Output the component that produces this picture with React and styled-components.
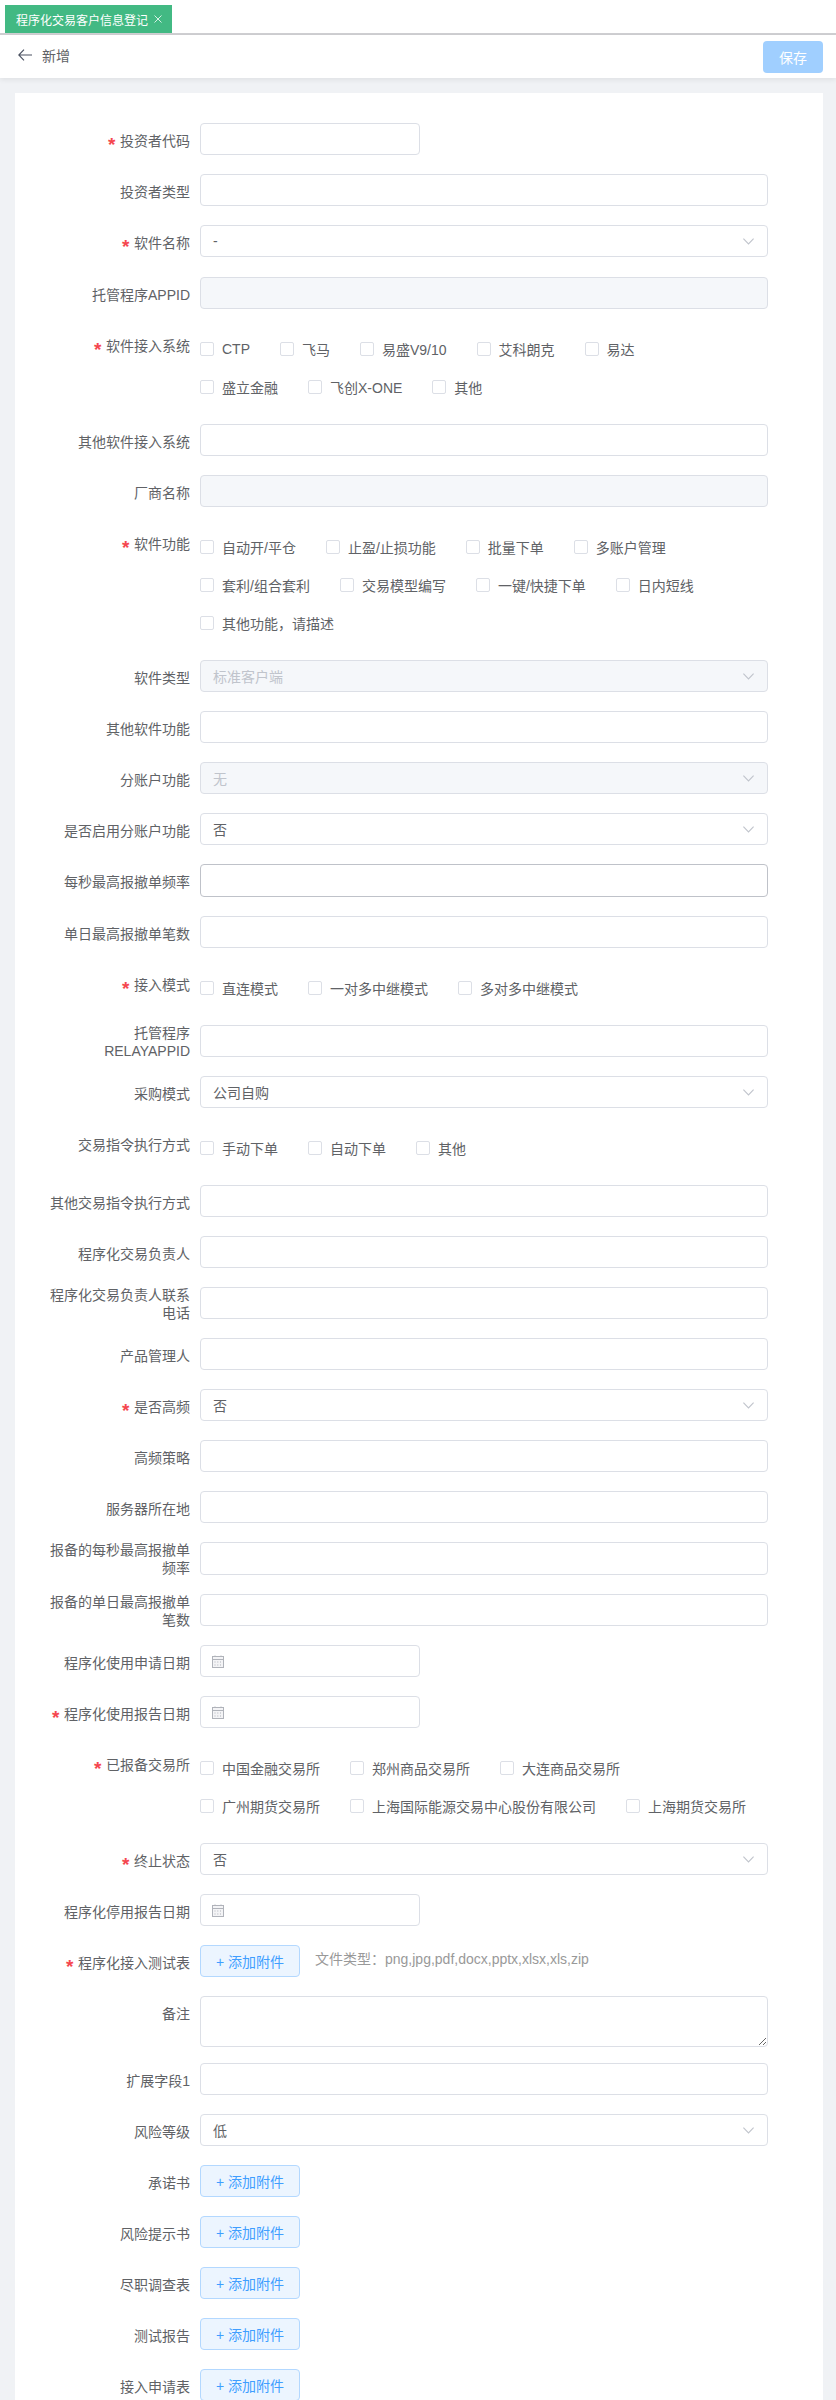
import React from "react";
import styled, { createGlobalStyle } from "styled-components";

const Global = createGlobalStyle`
  html, body { margin: 0; padding: 0; background: #f0f2f5; }
  body { font-family: "Liberation Sans", "Noto Sans CJK SC", sans-serif; font-size: 14px; color: #606266; }
  * { box-sizing: border-box; }
`;

const Page = styled.div`
  width: 836px;
  height: 2400px;
  overflow: hidden;
  background: #f0f2f5;
`;

const TabBar = styled.div`
  height: 35px;
  padding: 5px 0 0 5px;
  background: #fff;
  border-bottom: 2px solid #cfcfd2;
`;

const Tab = styled.div`
  width: 167px;
  height: 28px;
  padding-left: 11px;
  display: flex;
  align-items: center;
  gap: 6px;
  background: #42b983;
  color: #fff;
  font-size: 12px;
`;

const Header = styled.header`
  height: 43px;
  padding: 0 13px 0 18px;
  display: flex;
  align-items: center;
  justify-content: space-between;
  background: #fff;
  box-shadow: 0 2px 5px rgba(0, 0, 0, 0.07);
`;

const BackGroup = styled.div`
  display: flex;
  align-items: center;
  gap: 10px;
  margin-bottom: 3px;
  color: #606266;
`;

const SaveButton = styled.button`
  width: 60px;
  height: 32px;
  margin-top: 1px;
  border: 0;
  border-radius: 4px;
  background: #a0cfff;
  color: #fff;
  font: inherit;
`;

const Panel = styled.main`
  width: 808px;
  margin: 15px 0 0 15px;
  padding: 30px 55px 0 25px;
  background: #fff;
  min-height: 2400px;
`;

const Row = styled.div`
  display: flex;
  align-items: flex-start;
  margin-bottom: ${(p) => p.$gap ?? 19}px;
`;

const Label = styled.label`
  flex: none;
  width: 150px;
  height: 32px;
  margin-right: 10px;
  padding-top: ${(p) => (p.$two ? 0 : 9)}px;
  margin-top: ${(p) => (p.$two ? -1 : 0)}px;
  line-height: 18px;
  text-align: right;
  white-space: pre-line;
  color: #606266;
`;

const Star = styled.span`
  display: inline-block;
  width: 9px;
  margin-right: 3px;
  color: #f5474f;
  font-size: 19px;
  font-weight: 700;
  line-height: 18px;
  text-align: left;
  vertical-align: -5px;
`;

const TextInput = styled.input`
  display: block;
  width: ${(p) => (p.$short ? "220px" : "100%")};
  height: ${(p) => p.$height ?? 32}px;
  padding: 0 12px;
  border: 1px solid ${(p) => (p.$hover ? "#bfc2c9" : "#dcdfe6")};
  border-radius: 4px;
  background: ${(p) => (p.disabled ? "#f5f7fa" : "#fff")};
  font: inherit;
  color: #606266;
  outline: none;
`;

const TextArea = styled.textarea`
  display: block;
  width: 100%;
  height: 51px;
  padding: 5px 12px;
  border: 1px solid #dcdfe6;
  border-radius: 4px;
  background: #fff;
  font: inherit;
  resize: vertical;
  outline: none;
`;

const SelectBox = styled.div`
  width: 100%;
  height: 32px;
  padding: 0 13px 0 12px;
  display: flex;
  align-items: center;
  justify-content: space-between;
  border: 1px solid #dcdfe6;
  border-radius: 4px;
  background: ${(p) => (p.$disabled ? "#f5f7fa" : "#fff")};
  color: ${(p) => (p.$disabled ? "#c0c4cc" : "#606266")};
`;

const DateBox = styled.div`
  width: 220px;
  height: 32px;
  padding-left: 11px;
  display: flex;
  align-items: center;
  border: 1px solid #dcdfe6;
  border-radius: 4px;
  background: #fff;
`;

const CheckGroup = styled.div`
  flex: 1;
  padding-top: 2px;
  margin-bottom: -1px;
`;

const CheckLine = styled.div`
  height: 38px;
  display: flex;
  align-items: center;
  gap: 30px;
`;

const CheckItem = styled.span`
  display: inline-flex;
  align-items: center;
  gap: 8px;
  white-space: nowrap;
  color: #606266;
`;

const CheckBox = styled.span`
  width: 14px;
  height: 14px;
  border: 1px solid #dcdfe6;
  border-radius: 2px;
  background: #fff;
`;

const UploadLine = styled.div`
  display: flex;
  align-items: flex-start;
  gap: 15px;
`;

const UploadButton = styled.button`
  width: 100px;
  height: 32px;
  padding: 0;
  border: 1px solid #b3d8ff;
  border-radius: 4px;
  background: #ecf5ff;
  color: #409eff;
  font: inherit;
`;

const Tip = styled.span`
  line-height: 28px;
  color: #999;
  white-space: nowrap;
`;

const Control = styled.div`
  flex: 1;
  min-width: 0;
`;

const CloseIcon = () => (
  <svg width="8" height="8" viewBox="0 0 8 8" fill="none" stroke="#e8f7f0" strokeWidth="0.9">
    <path d="M0.5 0.5 7.5 7.5M7.5 0.5 0.5 7.5" />
  </svg>
);

const BackIcon = () => (
  <svg width="14" height="12" viewBox="0 0 14 12" fill="none" stroke="#4a5160" strokeWidth="1.1">
    <path d="M14 6H0.8M6 0.6 0.8 6 6 11.4" />
  </svg>
);

const Chevron = () => (
  <svg width="11" height="7" viewBox="0 0 11 7" fill="none" stroke="#c0c4cc" strokeWidth="1.1">
    <path d="M0.4 0.6 5.5 6 10.6 0.6" />
  </svg>
);

const CalendarIcon = () => (
  <svg width="12" height="13" viewBox="0 0 12 13" fill="none" stroke="#b0b3ba" strokeWidth="1">
    <rect x="0.5" y="1.5" width="11" height="11" fill="#f4f4f6" />
    <path d="M0.5 4.5H11.5" />
    <path d="M3 0.5V2M9 0.5V2" />
    <path d="M2.5 7H4M5.3 7H6.8M8 7H9.5M2.5 10H4M5.3 10H6.8M8 10H9.5" strokeDasharray="1 0.5" />
  </svg>
);

const rows = [
  { label: "投资者代码", req: 1, type: "short" },
  { label: "投资者类型", type: "input" },
  { label: "软件名称", req: 1, type: "select", value: "-", gap: 20 },
  { label: "托管程序APPID", type: "disabled" },
  { label: "软件接入系统", req: 1, type: "check", lines: [["CTP", "飞马", "易盛V9/10", "艾科朗克", "易达"], ["盛立金融", "飞创X-ONE", "其他"]] },
  { label: "其他软件接入系统", type: "input" },
  { label: "厂商名称", type: "disabled" },
  { label: "软件功能", req: 1, type: "check", lines: [["自动开/平仓", "止盈/止损功能", "批量下单", "多账户管理"], ["套利/组合套利", "交易模型编写", "一键/快捷下单", "日内短线"], ["其他功能，请描述"]] },
  { label: "软件类型", type: "select", value: "标准客户端", disabled: 1 },
  { label: "其他软件功能", type: "input" },
  { label: "分账户功能", type: "select", value: "无", disabled: 1 },
  { label: "是否启用分账户功能", type: "select", value: "否" },
  { label: "每秒最高报撤单频率", type: "input", height: 33, hover: 1 },
  { label: "单日最高报撤单笔数", type: "input" },
  { label: "接入模式", req: 1, type: "check", lines: [["直连模式", "一对多中继模式", "多对多中继模式"]] },
  { label: "托管程序\nRELAYAPPID", two: 1, type: "input" },
  { label: "采购模式", type: "select", value: "公司自购" },
  { label: "交易指令执行方式", type: "check", lines: [["手动下单", "自动下单", "其他"]] },
  { label: "其他交易指令执行方式", type: "input" },
  { label: "程序化交易负责人", type: "input" },
  { label: "程序化交易负责人联系\n电话", two: 1, type: "input" },
  { label: "产品管理人", type: "input" },
  { label: "是否高频", req: 1, type: "select", value: "否" },
  { label: "高频策略", type: "input" },
  { label: "服务器所在地", type: "input" },
  { label: "报备的每秒最高报撤单\n频率", two: 1, type: "input", height: 33 },
  { label: "报备的单日最高报撤单\n笔数", two: 1, type: "input" },
  { label: "程序化使用申请日期", type: "date" },
  { label: "程序化使用报告日期", req: 1, type: "date" },
  { label: "已报备交易所", req: 1, type: "check", lines: [["中国金融交易所", "郑州商品交易所", "大连商品交易所"], ["广州期货交易所", "上海国际能源交易中心股份有限公司", "上海期货交易所"]] },
  { label: "终止状态", req: 1, type: "select", value: "否" },
  { label: "程序化停用报告日期", type: "date" },
  { label: "程序化接入测试表", req: 1, type: "upload", tip: "文件类型：png,jpg,pdf,docx,pptx,xlsx,xls,zip" },
  { label: "备注", type: "textarea", gap: 16 },
  { label: "扩展字段1", type: "input" },
  { label: "风险等级", type: "select", value: "低" },
  { label: "承诺书", type: "upload" },
  { label: "风险提示书", type: "upload" },
  { label: "尽职调查表", type: "upload" },
  { label: "测试报告", type: "upload" },
  { label: "接入申请表", type: "upload" },
];

function FieldControl({ row }) {
  switch (row.type) {
    case "short":
      return <TextInput $short />;
    case "disabled":
      return <TextInput disabled />;
    case "select":
      return (
        <SelectBox $disabled={row.disabled}>
          <span>{row.value}</span>
          <Chevron />
        </SelectBox>
      );
    case "check":
      return (
        <CheckGroup>
          {row.lines.map((line, i) => (
            <CheckLine key={i}>
              {line.map((text) => (
                <CheckItem key={text}>
                  <CheckBox />
                  {text}
                </CheckItem>
              ))}
            </CheckLine>
          ))}
        </CheckGroup>
      );
    case "date":
      return (
        <DateBox>
          <CalendarIcon />
        </DateBox>
      );
    case "upload":
      return (
        <UploadLine>
          <UploadButton>+ 添加附件</UploadButton>
          {row.tip && <Tip>{row.tip}</Tip>}
        </UploadLine>
      );
    case "textarea":
      return <TextArea />;
    default:
      return <TextInput $height={row.height} $hover={row.hover} />;
  }
}

export default function App() {
  return (
    <Page>
      <Global />
      <TabBar>
        <Tab>
          程序化交易客户信息登记
          <CloseIcon />
        </Tab>
      </TabBar>
      <Header>
        <BackGroup>
          <BackIcon />
          新增
        </BackGroup>
        <SaveButton disabled>保存</SaveButton>
      </Header>
      <Panel>
        {rows.map((row) => (
          <Row key={row.label} $gap={row.gap}>
            <Label $two={row.two}>
              {row.req && <Star>*</Star>}
              {row.label}
            </Label>
            <Control>
              <FieldControl row={row} />
            </Control>
          </Row>
        ))}
      </Panel>
    </Page>
  );
}
